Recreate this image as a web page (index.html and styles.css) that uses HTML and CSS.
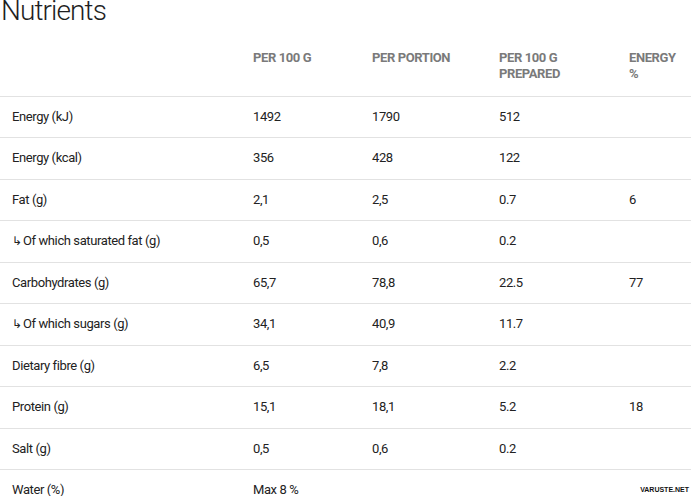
FILE: index.html
```html
<!DOCTYPE html>
<html>
<head>
<meta charset="utf-8">
<link rel="stylesheet" href="styles.css">
</head>
<body>
<div class="page">
  <h2 class="title">Nutrients</h2>
  <table class="nutri">
    <colgroup>
      <col class="c1"><col class="c2"><col class="c3"><col class="c4"><col class="c5">
    </colgroup>
    <thead>
      <tr>
        <th></th>
        <th>PER 100 G</th>
        <th>PER PORTION</th>
        <th>PER 100 G<br>PREPARED</th>
        <th>ENERGY<br>%</th>
      </tr>
    </thead>
    <tbody>
      <tr><td>Energy (kJ)</td><td>1492</td><td>1790</td><td>512</td><td></td></tr>
      <tr><td>Energy (kcal)</td><td>356</td><td>428</td><td>122</td><td></td></tr>
      <tr><td>Fat (g)</td><td>2,1</td><td>2,5</td><td>0.7</td><td>6</td></tr>
      <tr><td><span class="sub">↳</span>Of which saturated fat (g)</td><td>0,5</td><td>0,6</td><td>0.2</td><td></td></tr>
      <tr><td>Carbohydrates (g)</td><td>65,7</td><td>78,8</td><td>22.5</td><td>77</td></tr>
      <tr><td><span class="sub">↳</span>Of which sugars (g)</td><td>34,1</td><td>40,9</td><td>11.7</td><td></td></tr>
      <tr><td>Dietary fibre (g)</td><td>6,5</td><td>7,8</td><td>2.2</td><td></td></tr>
      <tr><td>Protein (g)</td><td>15,1</td><td>18,1</td><td>5.2</td><td>18</td></tr>
      <tr><td>Salt (g)</td><td>0,5</td><td>0,6</td><td>0.2</td><td></td></tr>
      <tr><td>Water (%)</td><td>Max 8 %</td><td></td><td></td><td></td></tr>
    </tbody>
  </table>
  <div class="mark">VARUSTE.NET</div>
</div>
</body>
</html>
```
FILE: styles.css
```css
html, body {
  margin: 0;
  padding: 0;
  background: #fff;
}
body {
  width: 691px;
  height: 496px;
  overflow: hidden;
  font-family: "Roboto", "Liberation Sans", sans-serif;
  color: #222;
}
.page {
  position: relative;
  display: flow-root;
  height: 496px;
  overflow: hidden;
}
.title {
  margin: -6px 0 0 1px;
  font-size: 28px;
  line-height: 34px;
  font-weight: 300;
  color: #1f1f1f;
  letter-spacing: -0.9px;
}
.nutri {
  width: 691px;
  border-collapse: collapse;
  table-layout: fixed;
  font-size: 13px;
  letter-spacing: -0.4px;
}
.c1 { width: 241px; }
.c2 { width: 119px; }
.c3 { width: 127px; }
.c4 { width: 130px; }
.c5 { width: 74px; }
.nutri th {
  text-align: left;
  vertical-align: top;
  font-weight: 700;
  color: #7a7a7a;
  line-height: 16px;
  padding: 22px 12px 0 12px;
  height: 68px;
  box-sizing: border-box;
  border-bottom: 1px solid #e2e2e2;
}
.nutri td {
  height: 41.5px;
  box-sizing: border-box;
  padding: 0 12px;
  vertical-align: middle;
  border-bottom: 1px solid #e2e2e2;
  line-height: 16px;
}
.sub {
  display: inline-block;
  width: 11px;
  font-size: 12px;
}
.mark {
  position: absolute;
  right: 1px;
  bottom: 2px;
  font-family: "Liberation Sans", sans-serif;
  font-size: 7px;
  line-height: 8px;
  font-weight: 700;
  color: #111;
  letter-spacing: 0;
  background: #fff;
  padding: 0 1px;
}
```
